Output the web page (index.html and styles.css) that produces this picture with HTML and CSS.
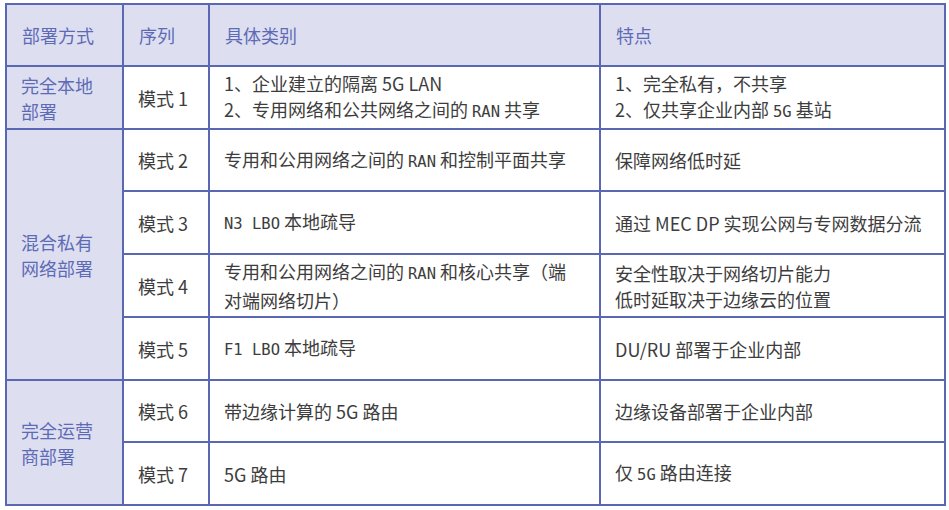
FILE: index.html
```html
<!DOCTYPE html>
<html lang="zh-CN">
<head>
<meta charset="utf-8">
<link rel="stylesheet" href="styles.css">
</head>
<body>
<table class="grid">
  <colgroup>
    <col class="c1"><col class="c2"><col class="c3"><col class="c4">
  </colgroup>
  <thead>
    <tr class="r-head">
      <th>部署方式</th>
      <th>序列</th>
      <th>具体类别</th>
      <th>特点</th>
    </tr>
  </thead>
  <tbody>
    <tr class="r-b">
      <td class="cat">完全本地<br>部署</td>
      <td>模式 1</td>
      <td>1、企业建立的隔离 5G LAN<br>2、专用网络和公共网络之间的 <span class="mono">RAN</span> 共享</td>
      <td>1、完全私有，不共享<br>2、仅共享企业内部 <span class="mono">5G</span> 基站</td>
    </tr>
    <tr class="r-a">
      <td class="cat" rowspan="4">混合私有<br>网络部署</td>
      <td>模式 2</td>
      <td>专用和公用网络之间的 <span class="mono">RAN</span> 和控制平面共享</td>
      <td>保障网络低时延</td>
    </tr>
    <tr class="r-b">
      <td>模式 3</td>
      <td><span class="mono">N3 LBO</span> 本地疏导</td>
      <td>通过 MEC DP 实现公网与专网数据分流</td>
    </tr>
    <tr class="r-b">
      <td>模式 4</td>
      <td>专用和公用网络之间的 <span class="mono">RAN</span> 和核心共享（端<br>对端网络切片）</td>
      <td>安全性取决于网络切片能力<br>低时延取决于边缘云的位置</td>
    </tr>
    <tr class="r-b">
      <td>模式 5</td>
      <td><span class="mono">F1 LBO</span> 本地疏导</td>
      <td>DU/RU 部署于企业内部</td>
    </tr>
    <tr class="r-a">
      <td class="cat" rowspan="2">完全运营<br>商部署</td>
      <td>模式 6</td>
      <td>带边缘计算的 5G 路由</td>
      <td>边缘设备部署于企业内部</td>
    </tr>
    <tr class="r-b">
      <td>模式 7</td>
      <td>5G 路由</td>
      <td>仅 <span class="mono">5G</span> 路由连接</td>
    </tr>
  </tbody>
</table>
</body>
</html>
```

FILE: styles.css
```css
html, body {
  margin: 0;
  padding: 0;
  background: #ffffff;
}

body {
  padding: 3px 0 0 5px;
  font-family: "Noto Sans CJK SC", "Noto Sans", sans-serif;
  font-size: 18px;
  color: #3d3d3d;
}

.grid {
  border-collapse: separate;
  border-spacing: 0;
  table-layout: fixed;
  width: 941px;
  border-top: 2px solid #5a68b3;
  border-left: 2px solid #5a68b3;
}

.c1 { width: 117px; }
.c2 { width: 86px; }
.c3 { width: 391px; }
.c4 { width: 345px; }

.grid th,
.grid td {
  box-sizing: border-box;
  border-right: 2px solid #5a68b3;
  border-bottom: 2px solid #5a68b3;
  padding: 0 14px 0 14px;
  text-align: left;
  vertical-align: middle;
  line-height: 26px;
  font-weight: 400;
}

.grid th {
  background: #dddff0;
  color: #5d6bb6;
  height: 62px;
  padding-left: 15px;
}

.r-a td { height: 62px; }
.r-b td { height: 63px; }

.grid td.cat {
  background: #dddff0;
  color: #5d6bb6;
}

.mono {
  font-family: "DejaVu Sans Mono", "Liberation Mono", monospace;
  font-size: 15.5px;
}
```
